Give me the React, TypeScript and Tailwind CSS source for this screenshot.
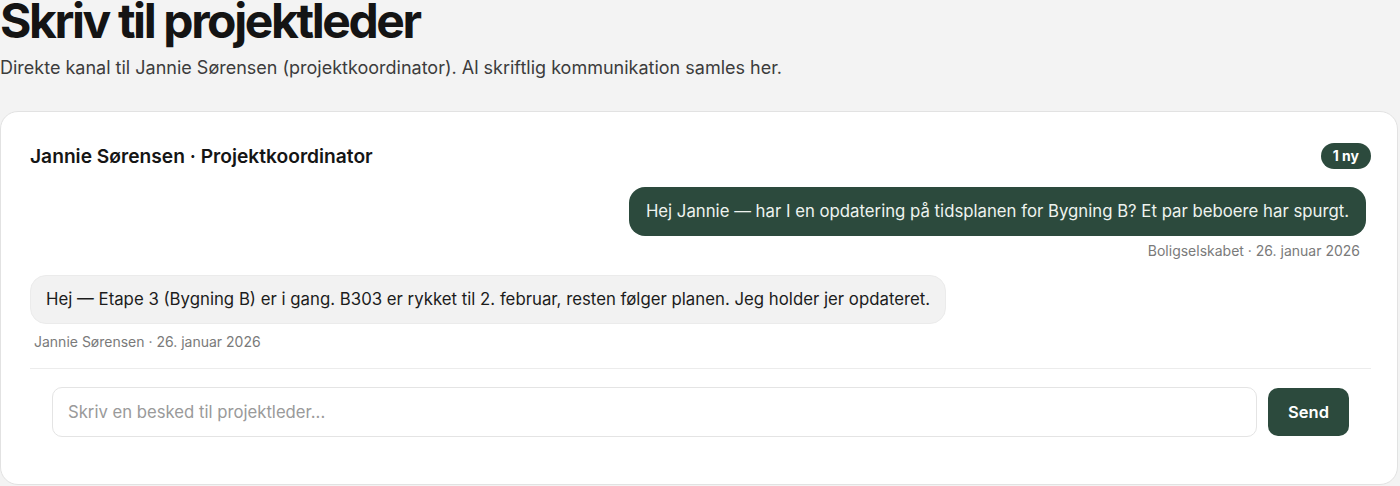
import React from "react";

export default function App() {
  return (
    <div className="min-h-[486px] bg-[#f3f3f3] text-[#111] font-['Inter','Liberation_Sans',sans-serif]">
      <h1 className="pt-[1px] text-[48px] leading-[40px] font-bold tracking-[-0.05em] text-[#141414]">
        Skriv til projektleder
      </h1>
      <p className="mt-[15px] text-[18px] leading-[24px] text-[#3c3c3c]">
        Direkte kanal til Jannie Sørensen (projektkoordinator). Al skriftlig kommunikation samles her.
      </p>
      <div className="mt-[31px] mr-[2px] rounded-[18px] border border-[#e2e2e2] bg-white pl-[29px] pr-[26px] pt-[31px] pb-[47px]">
        <div className="flex items-center justify-between">
          <h2 className="text-[19.2px] leading-[26px] font-semibold text-[#151515]">
            Jannie Sørensen · Projektkoordinator
          </h2>
          <span className="rounded-full bg-[#2c4a3d] px-[12px] py-[4px] text-[14px] leading-[18px] font-bold text-white">
            1 ny
          </span>
        </div>
        <div className="mt-[18px] flex flex-col">
          <div className="flex flex-col items-end pr-[5px]">
            <div className="rounded-[16px] bg-[#2c4a3d] px-[17px] py-[12px] text-[16.75px] leading-[25px] text-[#eef3ef]">
              Hej Jannie — har I en opdatering på tidsplanen for Bygning B? Et par beboere har spurgt.
            </div>
            <div className="mt-[6px] pr-[6px] text-[14px] leading-[17px] text-[#7a7a7a]">
              Boligselskabet · 26. januar 2026
            </div>
          </div>
          <div className="mt-[16px] flex flex-col items-start">
            <div className="rounded-[16px] border border-[#ebebeb] bg-[#f2f2f2] px-[15px] py-[11px] text-[16.8px] leading-[25px] text-[#1c1c1c]">
              Hej — Etape 3 (Bygning B) er i gang. B303 er rykket til 2. februar, resten følger planen. Jeg holder jer opdateret.
            </div>
            <div className="mt-[9px] pl-[4px] text-[14px] leading-[17px] text-[#7a7a7a]">
              Jannie Sørensen · 26. januar 2026
            </div>
          </div>
        </div>
        <div className="mt-[18px] border-t border-[#ececec] px-[22px] pt-[18px]">
          <div className="flex items-center gap-[11px]">
            <input
              className="h-[50px] flex-1 rounded-[10px] border border-[#e4e4e4] bg-white px-[15px] text-[16.7px] text-[#222] placeholder:text-[#9a9a9a] outline-none"
              placeholder="Skriv en besked til projektleder..."
            />
            <button className="h-[48px] w-[81px] rounded-[10px] bg-[#2c4a3d] text-[16.5px] font-semibold text-white">
              Send
            </button>
          </div>
        </div>
      </div>
    </div>
  );
}
